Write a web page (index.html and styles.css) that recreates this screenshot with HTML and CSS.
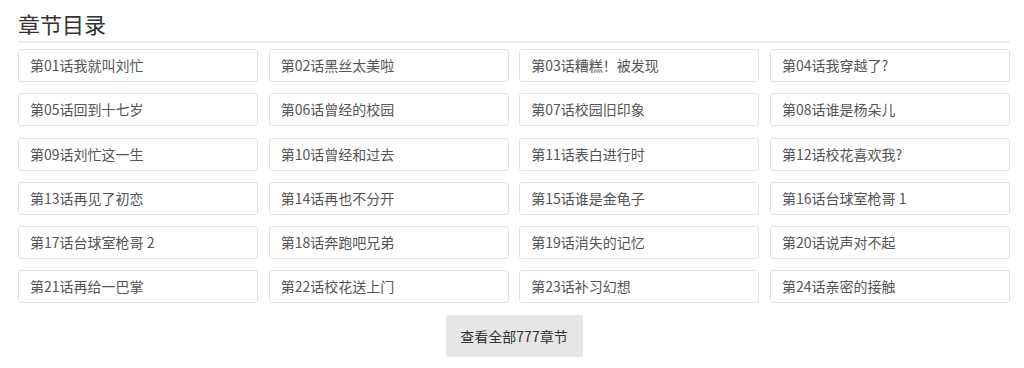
FILE: index.html
```html
<!DOCTYPE html>
<html lang="zh-CN">
<head>
<meta charset="utf-8">
<title>章节目录</title>
<link rel="stylesheet" href="styles.css">
</head>
<body>
<div class="wrap">
  <h2 class="title">章节目录</h2>
  <ul class="chapters">
    <li><a class="item">第01话我就叫刘忙</a></li>
    <li><a class="item">第02话黑丝太美啦</a></li>
    <li><a class="item">第03话糟糕！被发现</a></li>
    <li><a class="item">第04话我穿越了?</a></li>
    <li><a class="item">第05话回到十七岁</a></li>
    <li><a class="item">第06话曾经的校园</a></li>
    <li><a class="item">第07话校园旧印象</a></li>
    <li><a class="item">第08话谁是杨朵儿</a></li>
    <li><a class="item">第09话刘忙这一生</a></li>
    <li><a class="item">第10话曾经和过去</a></li>
    <li><a class="item">第11话表白进行时</a></li>
    <li><a class="item">第12话校花喜欢我?</a></li>
    <li><a class="item">第13话再见了初恋</a></li>
    <li><a class="item">第14话再也不分开</a></li>
    <li><a class="item">第15话谁是金龟子</a></li>
    <li><a class="item">第16话台球室枪哥 1</a></li>
    <li><a class="item">第17话台球室枪哥 2</a></li>
    <li><a class="item">第18话奔跑吧兄弟</a></li>
    <li><a class="item">第19话消失的记忆</a></li>
    <li><a class="item">第20话说声对不起</a></li>
    <li><a class="item">第21话再给一巴掌</a></li>
    <li><a class="item">第22话校花送上门</a></li>
    <li><a class="item">第23话补习幻想</a></li>
    <li><a class="item">第24话亲密的接触</a></li>
  </ul>
  <div class="more-row"><a class="more">查看全部777章节</a></div>
</div>
</body>
</html>
```

FILE: styles.css
```css
html, body {
  margin: 0;
  padding: 0;
  background: #fff;
}
body {
  font-family: "Noto Sans CJK SC", "Noto Sans", sans-serif;
  color: #333;
}
.wrap {
  width: 992px;
  margin-left: 18px;
}
.title {
  margin: 8px 0 0 0;
  padding: 0 0 3px 0;
  font-size: 22px;
  line-height: 30px;
  font-weight: normal;
  color: #333;
  border-bottom: 2px solid #eee;
}
.chapters {
  list-style: none;
  margin: 6px 0 0 0;
  padding: 0;
  display: grid;
  grid-template-columns: repeat(4, 1fr);
  column-gap: 10.67px;
  row-gap: 11.3px;
}
.item {
  display: block;
  box-sizing: border-box;
  height: 33px;
  line-height: 31px;
  padding-left: 11px;
  border: 1px solid #e3e3e3;
  border-radius: 3px;
  font-size: 14px;
  color: #555;
  white-space: nowrap;
  overflow: hidden;
}
.more-row {
  display: flex;
  justify-content: center;
  margin-top: 12px;
}
.more {
  display: block;
  width: 137px;
  height: 42px;
  line-height: 42px;
  text-align: center;
  background: #e6e6e6;
  border-radius: 2px;
  font-size: 14px;
  color: #333;
}
```
